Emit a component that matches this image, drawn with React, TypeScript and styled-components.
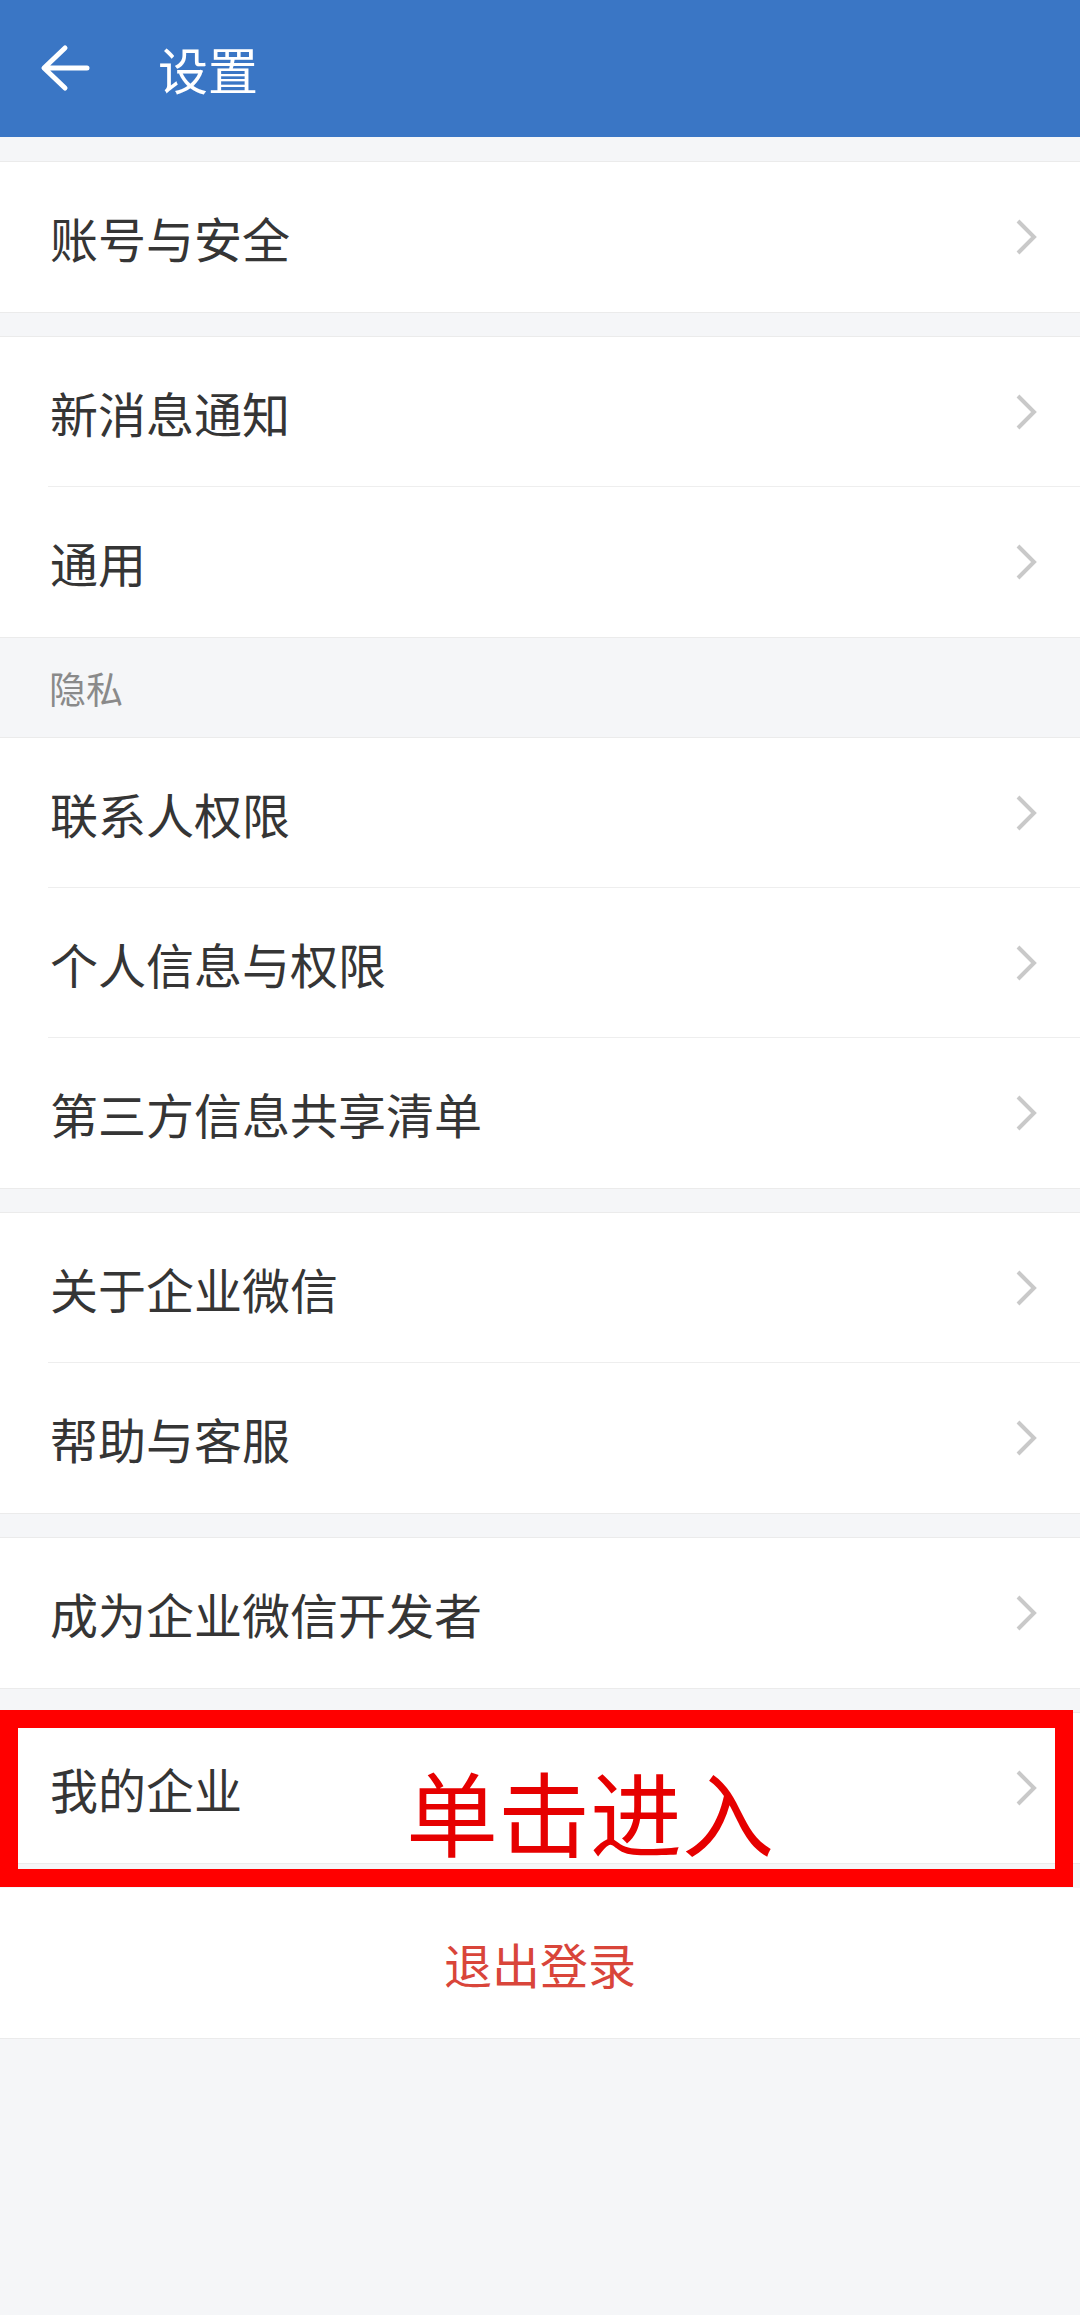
import React from 'react'
import styled, { createGlobalStyle } from 'styled-components'

const GlobalStyle = createGlobalStyle`
  html, body {
    margin: 0;
    padding: 0;
    background: #f5f6f8;
    font-family: "Noto Sans CJK SC", "Noto Sans", sans-serif;
  }
  #root {
    min-height: 2315px;
    background: #f5f6f8;
  }
`

const Header = styled.div`
  height: 137px;
  background-color: #3a76c5;
  display: flex;
  align-items: center;
  padding-left: 40px;
`

const BackIcon = styled.svg`
  width: 50px;
  height: 50px;
  margin-top: -2px;
`

const Title = styled.div`
  margin-left: 68px;
  color: #ffffff;
  font-size: 50px;
  line-height: 1;
  margin-top: -2px;
`

const Gap = styled.div`
  height: 25px;
`

const Group = styled.div`
  background: #ffffff;
  border-top: 1px solid #ebebeb;
  border-bottom: 1px solid #ebebeb;
  margin: -1px 0;
`

const Row = styled.div<{ $last?: boolean }>`
  position: relative;
  height: 150px;
  display: flex;
  align-items: center;
  padding: 0 43px 0 50px;
  box-sizing: border-box;
  background: #ffffff;

  &::after {
    content: '';
    display: ${(p) => (p.$last ? 'none' : 'block')};
    position: absolute;
    left: 48px;
    right: 0;
    bottom: 0;
    height: 1px;
    background: #eeeeee;
  }
`

const Label = styled.div`
  flex: 1;
  font-size: 48px;
  color: #353535;
  line-height: 1;
`

const Chevron = styled.svg`
  width: 22px;
  height: 36px;
`

const SectionTitle = styled.div`
  height: 101px;
  display: flex;
  align-items: center;
  padding-left: 49px;
  font-size: 37px;
  color: #8a8a8a;
`

const Logout = styled.div`
  height: 150px;
  background: #ffffff;
  display: flex;
  align-items: center;
  justify-content: center;
  font-size: 48px;
  color: #d9453a;
  border-bottom: 1px solid #ebebeb;
`

const Highlight = styled.div`
  position: absolute;
  top: -3px;
  left: 0;
  width: 1073px;
  height: 177px;
  border: 18px solid #ff0000;
  box-sizing: border-box;
  display: flex;
  align-items: center;
  padding-left: 388px;
  pointer-events: none;
`

const Hint = styled.span`
  font-size: 92px;
  color: #e60000;
  line-height: 1;
  margin-top: 22px;
`

const Arrow = () => (
  <Chevron viewBox="0 0 22 36">
    <path d="M3 2 L19 18 L3 34" fill="none" stroke="#c9c9c9" strokeWidth="4" />
  </Chevron>
)

const Item: React.FC<{ title: string; last?: boolean; children?: React.ReactNode }> = ({ title, last, children }) => (
  <Row $last={last}>
    <Label>{title}</Label>
    <Arrow />
    {children}
  </Row>
)

const App = () => {
  return (
    <>
      <GlobalStyle />
      <Header>
        <BackIcon viewBox="0 0 50 50">
          <path
            d="M47 25 H5 M25 5 L4 25 L25 45"
            fill="none"
            stroke="#ffffff"
            strokeWidth="5"
            strokeLinecap="round"
            strokeLinejoin="round"
          />
        </BackIcon>
        <Title>设置</Title>
      </Header>

      <Gap />
      <Group>
        <Item title="账号与安全" last />
      </Group>

      <Gap />
      <Group>
        <Item title="新消息通知" />
        <Item title="通用" last />
      </Group>

      <SectionTitle>隐私</SectionTitle>
      <Group>
        <Item title="联系人权限" />
        <Item title="个人信息与权限" />
        <Item title="第三方信息共享清单" last />
      </Group>

      <Gap />
      <Group>
        <Item title="关于企业微信" />
        <Item title="帮助与客服" last />
      </Group>

      <Gap />
      <Group>
        <Item title="成为企业微信开发者" last />
      </Group>

      <Gap />
      <Group>
        <Item title="我的企业" last>
          <Highlight>
            <Hint>单击进入</Hint>
          </Highlight>
        </Item>
      </Group>

      <Gap />
      <Logout>退出登录</Logout>
    </>
  )
}

export default App
